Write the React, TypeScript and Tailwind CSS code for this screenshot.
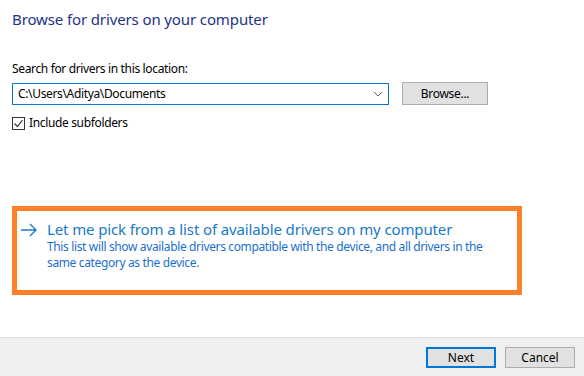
const font = { fontFamily: '"Segoe UI", "Noto Sans", "Open Sans", sans-serif' };

const App = () => {
  return (
    <div className="w-[584px] h-[376px] flex flex-col bg-white text-black" style={font}>
      <div className="flex-1 flex flex-col px-3">
        {/* Title */}
        <h1 className="mt-[9px] text-[15px] leading-[20px] tracking-[-0.12px] text-[#1e3287] font-normal">
          Browse for drivers on your computer
        </h1>

        {/* Location */}
        <p className="mt-[32px] text-[12px] leading-[16px] tracking-[-0.35px]">Search for drivers in this location:</p>
        <div className="mt-[5px] flex items-center gap-[13px]">
          <div className="w-[377px] h-[22px] border border-[#0078d7] flex items-center justify-between pl-[5px] pr-[4px]">
            <span className="text-[12px] leading-[16px] tracking-[-0.35px]">C:\Users\Aditya\Documents</span>
            <svg width="10" height="6" viewBox="0 0 10 6" className="mr-[1px]">
              <path d="M1 1l4 4 4-4" fill="none" stroke="#606060" strokeWidth="1" />
            </svg>
          </div>
          <button className="w-[86px] h-[23px] bg-[#e1e1e1] border border-[#adadad] text-[12px] leading-[16px] tracking-[-0.3px]">
            Browse...
          </button>
        </div>
        <label className="mt-[10px] flex items-center gap-[4px] text-[12px] leading-[16px] tracking-[-0.35px]">
          <span className="w-[13px] h-[13px] border border-[#333] flex items-center justify-center bg-white">
            <svg width="11" height="11" viewBox="0 0 11 11">
              <path d="M1.5 5.5l3 3 5-6.5" fill="none" stroke="#333" strokeWidth="1.2" />
            </svg>
          </span>
          Include subfolders
        </label>

        {/* Highlighted option */}
        <div className="mt-[75px] w-[510px] h-[89px] border-[5px] border-[#fd7f28] pt-[8px] pl-[3px]">
          <div className="flex items-start gap-[9px]">
            <svg width="18" height="14" viewBox="0 0 18 14" className="mt-[4px] shrink-0">
              <path d="M1 7h15M10 1l6 6-6 6" fill="none" stroke="#1979ca" strokeWidth="1.4" />
            </svg>
            <div className="text-[#1979ca]">
              <p className="text-[15px] leading-[20px] tracking-[-0.12px]">Let me pick from a list of available drivers on my computer</p>
              <p className="text-[12px] leading-[16px] tracking-[-0.36px] text-[#1a6fd0]">
                This list will show available drivers compatible with the device, and all drivers in the
                <br />
                same category as the device.
              </p>
            </div>
          </div>
        </div>
      </div>

      {/* Footer */}
      <div className="h-[39px] border-t border-[#dfdfdf] bg-[#efefef] flex items-start justify-end gap-[9px] pt-[9px] pr-[9px]">
        <button className="w-[70px] h-[21px] bg-[#e1e1e1] border-2 border-[#0078d7] text-[12px] leading-[16px]">
          Next
        </button>
        <button className="w-[70px] h-[21px] bg-[#e1e1e1] border border-[#adadad] text-[12px] leading-[16px]">
          Cancel
        </button>
      </div>
    </div>
  );
};

export default App;
